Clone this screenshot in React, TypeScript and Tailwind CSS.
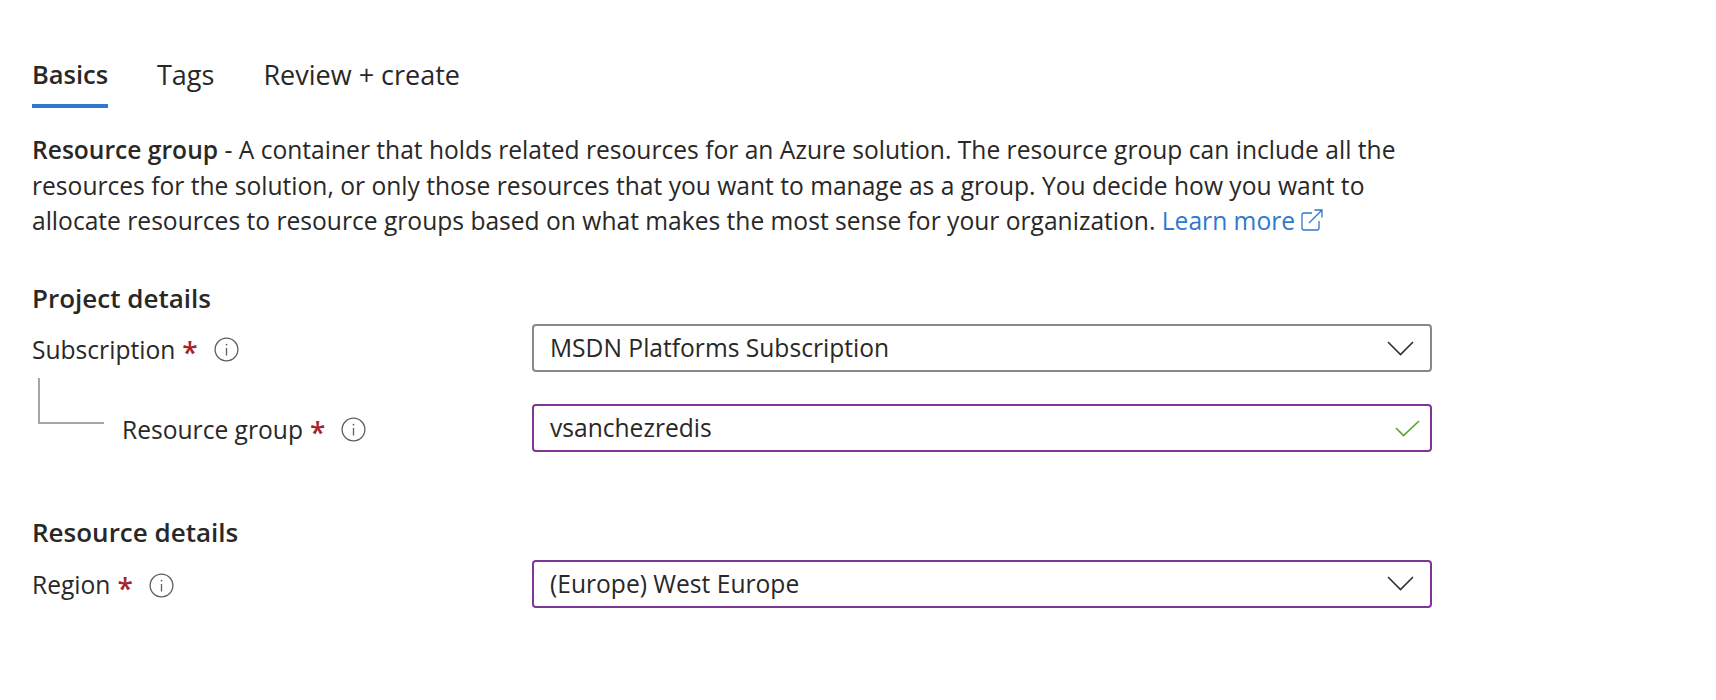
function Label({ text }: { text: string }) {
  return (
    <div className="mt-[3px] flex items-center">
      <span>{text}</span>
      <span className="ml-[7px] h-[35px] text-[28px] font-semibold leading-[40px] text-[#a4262c]">*</span>
      <svg className="ml-[16px] h-[25px] w-[25px] text-[#605e5c]" viewBox="0 0 25 25" fill="none" stroke="currentColor">
        <circle cx="12.5" cy="12.5" r="11.4" strokeWidth="1.3" />
        <path d="M12.5 11v7.5" strokeWidth="1.3" />
        <circle cx="12.5" cy="7.6" r="0.9" fill="currentColor" stroke="none" />
      </svg>
    </div>
  );
}

function Chevron() {
  return (
    <svg className="h-[15px] w-[27px] text-[#323130]" viewBox="0 0 27 15" fill="none" stroke="currentColor" strokeWidth="1.6">
      <path d="M1 1l12.5 12.5L26 1" />
    </svg>
  );
}

function Field({ value, purple, check }: { value: string; purple?: boolean; check?: boolean }) {
  return (
    <div className={`flex h-[48px] w-[900px] items-center justify-between rounded-[4px] border-2 pl-[16px] ${check ? "pr-[10px]" : "pr-[16px]"} ${purple ? "border-[#7f3598]" : "border-[#8a8886]"}`}>
      <span>{value}</span>
      {check ? (
        <svg className="h-[17px] w-[25px] text-[#5ea32f]" viewBox="0 0 25 17" fill="none" stroke="currentColor" strokeWidth="1.7">
          <path d="M1 8l7.5 7.5L24 1" />
        </svg>
      ) : (
        <Chevron />
      )}
    </div>
  );
}

export default function App() {
  return (
    <div className="h-[700px] w-[1716px] bg-white pl-[32px] pt-[57px] font-['Open_Sans','Noto_Sans',sans-serif] text-[24.6px] leading-[35.5px] text-[#292827]">
      <div className="flex text-[27px]">
        <div className="h-[51px] w-[76px] border-b-4 border-[#3277cf] text-[25.5px] font-semibold">Basics</div>
        <div className="ml-[49px]">Tags</div>
        <div className="ml-[49px]">Review + create</div>
      </div>
      <p className="mt-[24px] w-[1400px]">
        <b className="font-semibold">Resource group</b> - A container that holds related resources for an Azure solution. The resource group can include all the resources for the solution, or only those resources that you want to manage as a group. You decide how you want to allocate resources to resource groups based on what makes the most sense for your organization.{" "}
        <span className="text-[#2f78cf]">
          Learn more{" "}
          <svg className="inline h-[22px] w-[22px] align-[-1px]" viewBox="0 0 22 22" fill="none" stroke="currentColor" strokeWidth="1.3">
            <path d="M11 4H3a2 2 0 0 0-2 2v13a2 2 0 0 0 2 2h13a2 2 0 0 0 2-2v-7" />
            <path d="M8 14L21 1M13.5 1H21v7.5" />
          </svg>
        </span>
      </p>
      <h2 className="mt-[42px] text-[26px] font-semibold">Project details</h2>
      <div className="mt-[8px] flex h-[48px] w-[1400px] items-center justify-between">
        <Label text="Subscription" />
        <Field value="MSDN Platforms Subscription" />
      </div>
      <div className="relative mt-[32px] flex h-[48px] w-[1400px] items-center justify-between">
        <div className="pl-[90px]">
          <Label text="Resource group" />
        </div>
        <div className="absolute left-[6px] top-[-26px] h-[46px] w-[66px] border-b-2 border-l-2 border-[#a6a6a6]" />
        <Field value="vsanchezredis" purple check />
      </div>
      <h2 className="mt-[63px] text-[26px] font-semibold">Resource details</h2>
      <div className="mt-[9px] flex h-[48px] w-[1400px] items-center justify-between">
        <Label text="Region" />
        <Field value="(Europe) West Europe" purple />
      </div>
    </div>
  );
}
